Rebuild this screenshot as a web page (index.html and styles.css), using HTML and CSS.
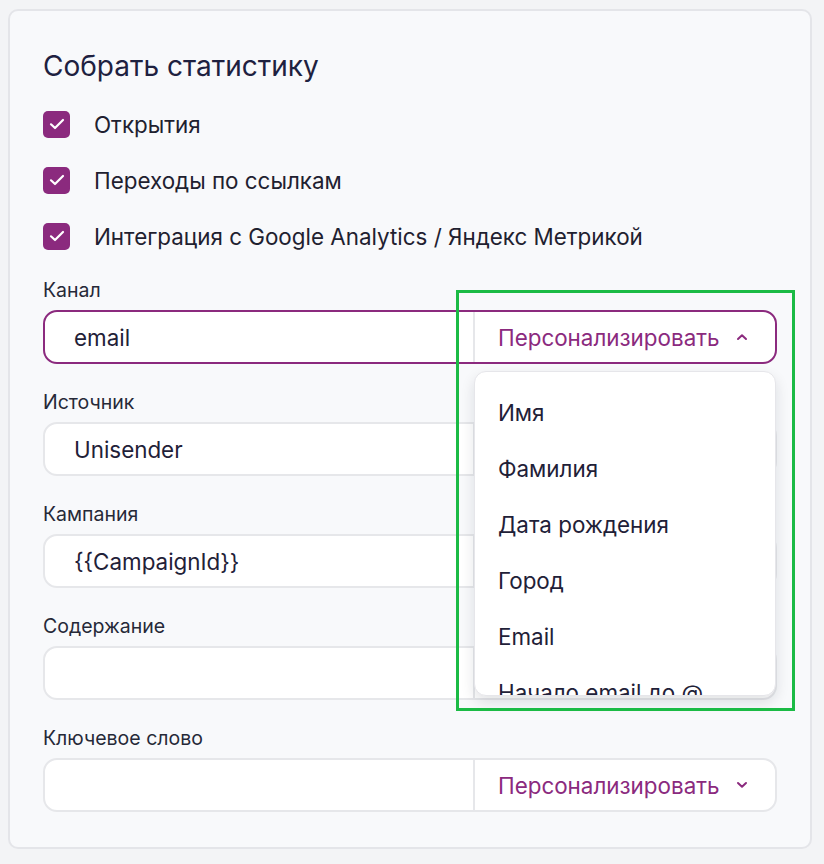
FILE: index.html
```html
<!DOCTYPE html>
<html lang="ru">
<head>
    <meta charset="UTF-8">
    <meta name="viewport" content="width=device-width, initial-scale=1.0">
    <title>Собрать статистику</title>
    <link rel="stylesheet" href="styles.css">
</head>
<body>

    <div class="card">
        <h2 class="card-title">Собрать статистику</h2>

        <div class="checks">
            <label class="check">
                <span class="check-box"><svg width="16" height="12" viewBox="0 0 16 12"><polyline points="2,6.3 6,10 14,2" fill="none" stroke="#fff" stroke-width="2.2" stroke-linecap="round" stroke-linejoin="round"/></svg></span>
                Открытия
            </label>
            <label class="check">
                <span class="check-box"><svg width="16" height="12" viewBox="0 0 16 12"><polyline points="2,6.3 6,10 14,2" fill="none" stroke="#fff" stroke-width="2.2" stroke-linecap="round" stroke-linejoin="round"/></svg></span>
                Переходы по ссылкам
            </label>
            <label class="check">
                <span class="check-box"><svg width="16" height="12" viewBox="0 0 16 12"><polyline points="2,6.3 6,10 14,2" fill="none" stroke="#fff" stroke-width="2.2" stroke-linecap="round" stroke-linejoin="round"/></svg></span>
                Интеграция с Google Analytics / Яндекс Метрикой
            </label>
        </div>

        <div class="field">
            <div class="field-label">Канал</div>
            <div class="field-box active">
                <div class="field-value">email</div>
                <div class="personal">
                    Персонализировать
                    <svg class="chevron" width="12" height="8" viewBox="0 0 12 8"><polyline points="2,6 6,2.2 10,6" fill="none" stroke="#8b2a7e" stroke-width="2" stroke-linecap="round" stroke-linejoin="round"/></svg>
                </div>
                <div class="dropdown">
                    <div class="dropdown-item">Имя</div>
                    <div class="dropdown-item">Фамилия</div>
                    <div class="dropdown-item">Дата рождения</div>
                    <div class="dropdown-item">Город</div>
                    <div class="dropdown-item">Email</div>
                    <div class="dropdown-item">Начало email до @</div>
                </div>
            </div>
        </div>

        <div class="field">
            <div class="field-label">Источник</div>
            <div class="field-box">
                <div class="field-value">Unisender</div>
                <div class="personal">
                    Персонализировать
                    <svg class="chevron" width="12" height="8" viewBox="0 0 12 8"><polyline points="2,2 6,5.8 10,2" fill="none" stroke="#8b2a7e" stroke-width="2" stroke-linecap="round" stroke-linejoin="round"/></svg>
                </div>
            </div>
        </div>

        <div class="field">
            <div class="field-label">Кампания</div>
            <div class="field-box">
                <div class="field-value">{{CampaignId}}</div>
                <div class="personal">
                    Персонализировать
                    <svg class="chevron" width="12" height="8" viewBox="0 0 12 8"><polyline points="2,2 6,5.8 10,2" fill="none" stroke="#8b2a7e" stroke-width="2" stroke-linecap="round" stroke-linejoin="round"/></svg>
                </div>
            </div>
        </div>

        <div class="field">
            <div class="field-label">Содержание</div>
            <div class="field-box">
                <div class="field-value"></div>
                <div class="personal">
                    Персонализировать
                    <svg class="chevron" width="12" height="8" viewBox="0 0 12 8"><polyline points="2,2 6,5.8 10,2" fill="none" stroke="#8b2a7e" stroke-width="2" stroke-linecap="round" stroke-linejoin="round"/></svg>
                </div>
            </div>
        </div>

        <div class="field">
            <div class="field-label">Ключевое слово</div>
            <div class="field-box">
                <div class="field-value"></div>
                <div class="personal">
                    Персонализировать
                    <svg class="chevron" width="12" height="8" viewBox="0 0 12 8"><polyline points="2,2 6,5.8 10,2" fill="none" stroke="#8b2a7e" stroke-width="2" stroke-linecap="round" stroke-linejoin="round"/></svg>
                </div>
            </div>
        </div>
    </div>

    <div class="highlight"></div>

</body>
</html>
```

FILE: styles.css
```css
body {
    margin: 0;
    padding: 9px 12px 16px 8px;
    background-color: #f3f4f6;
    font-family: Inter, "Noto Sans", sans-serif;
    color: #1f2138;
    position: relative;
}
.card {
    width: 804px;
    box-sizing: border-box;
    border: 2px solid #e4e5e9;
    border-radius: 10px;
    background-color: #f8f9fb;
    padding: 31px 33px 35px 33px;
}
.card-title {
    margin: 0;
    font-size: 28px;
    font-weight: 400;
    line-height: 48px;
    color: #1e2140;
}
.checks {
    display: flex;
    flex-direction: column;
    margin-top: 6px;
}
.check {
    display: flex;
    align-items: center;
    gap: 24px;
    height: 56px;
    font-size: 22.4px;
    color: #1f2130;
}
.check-box {
    width: 27px;
    height: 27px;
    border-radius: 5px;
    background-color: #8b2a7e;
    display: flex;
    align-items: center;
    justify-content: center;
}
.field {
    margin-top: 15px;
}
.field + .field {
    margin-top: 27px;
}
.field-label {
    font-size: 19.5px;
    line-height: 22px;
    color: #262938;
    margin-bottom: 9px;
}
.field-box {
    position: relative;
    display: flex;
    height: 54px;
    box-sizing: border-box;
    border: 2px solid #e6e7ea;
    border-radius: 14px;
    background-color: #fff;
}
.field-box.active {
    border-color: #8b2a7e;
}
.field-value {
    flex: 1;
    display: flex;
    align-items: center;
    padding-left: 29px;
    font-size: 22.4px;
    color: #1f2138;
}
.personal {
    width: 302px;
    box-sizing: border-box;
    border-left: 2px solid #e6e7ea;
    display: flex;
    align-items: center;
    padding-left: 23px;
    gap: 16px;
    font-size: 22.4px;
    color: #8b2a7e;
}
.dropdown {
    position: absolute;
    top: calc(100% + 9px);
    right: -1px;
    width: 302px;
    height: 325px;
    box-sizing: border-box;
    overflow: hidden;
    background-color: #fff;
    border: 1px solid #e6e6ea;
    border-radius: 12px;
    box-shadow: 0 6px 14px rgba(20, 22, 40, 0.12);
    padding-top: 12px;
    z-index: 2;
}
.dropdown-item {
    height: 56px;
    display: flex;
    align-items: center;
    padding-left: 23px;
    font-size: 22.4px;
    color: #1f2138;
}
.highlight {
    position: absolute;
    left: 456px;
    top: 290px;
    width: 339px;
    height: 421px;
    box-sizing: border-box;
    border: 3px solid #1bbb45;
    z-index: 3;
}
```
